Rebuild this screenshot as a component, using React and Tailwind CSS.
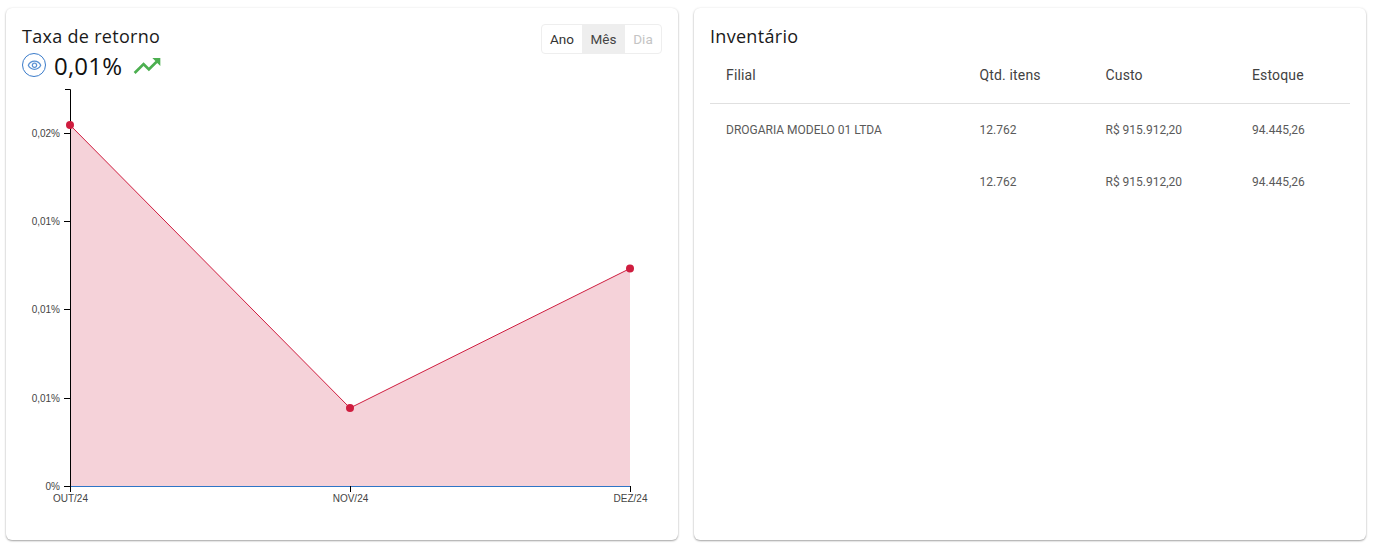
const yTicks = [
  { y: 133, label: '0,02%' },
  { y: 221, label: '0,01%' },
  { y: 309, label: '0,01%' },
  { y: 398, label: '0,01%' },
  { y: 486, label: '0%' },
];

const xTicks = [
  { x: 70, label: 'OUT/24' },
  { x: 350, label: 'NOV/24' },
  { x: 630, label: 'DEZ/24' },
];

const points = [
  [70, 125],
  [350, 408],
  [630, 268.5],
];

const rows = [
  { filial: 'DROGARIA MODELO 01 LTDA', qtd: '12.762', custo: 'R$ 915.912,20', estoque: '94.445,26' },
  { filial: '', qtd: '12.762', custo: 'R$ 915.912,20', estoque: '94.445,26' },
];

// svg coords are offset from the card's left/top edge
const Chart = () => (
  <svg width="672" height="452" viewBox="6 89 672 452" className="block">
    <polygon points="70,125 350,408 630,268.5 630,486 70,486" fill="#cf1d3f" fillOpacity="0.2" />
    <polyline points="70,125 350,408 630,268.5" fill="none" stroke="#cf1d3f" strokeWidth="1" />
    <line x1="70" y1="486.5" x2="630" y2="486.5" stroke="#2f75c7" strokeWidth="1" />
    <path d="M65 89.5H70.5V490" fill="none" stroke="#000" strokeWidth="1" />
    {yTicks.map((t) => (
      <g key={t.y}>
        <line x1="64" y1={t.y + 0.5} x2="70" y2={t.y + 0.5} stroke="#000" />
        <text x="60" y={t.y + 4} textAnchor="end" fontSize="10" fontFamily="Liberation Sans, sans-serif" fill="#444">
          {t.label}
        </text>
      </g>
    ))}
    {xTicks.map((t) => (
      <g key={t.x}>
        <line x1={t.x + 0.5} y1="486" x2={t.x + 0.5} y2="492" stroke="#000" />
        <text x={t.x + 0.5} y="502" textAnchor="middle" fontSize="10" fontFamily="Liberation Sans, sans-serif" fill="#444">
          {t.label}
        </text>
      </g>
    ))}
    {points.map(([x, y]) => (
      <circle key={x} cx={x} cy={y} r="4" fill="#cf1d3f" />
    ))}
  </svg>
);

const App = () => {
  return (
    <div className="flex h-[558px] w-[1374px] items-start gap-4 bg-white pl-[6px] pt-2 font-['Roboto',sans-serif]">
      {/* Taxa de retorno */}
      <div className="h-[532px] w-[672px] overflow-hidden rounded-md bg-white shadow-[0_1px_2px_rgba(0,0,0,0.35),0_0_3px_rgba(0,0,0,0.06)]">
        <div className="flex h-[81px] items-start justify-between pl-4 pr-4 pt-4">
          <div>
            <h2 className="font-['Open_Sans',sans-serif] text-lg font-medium leading-6 tracking-[0.3px] text-[#1a1a1a]">Taxa de retorno</h2>
            <div className="mt-[5px] flex h-6 items-center">
              <span className="flex size-6 items-center justify-center rounded-full border border-[#3a7bca]">
                <svg width="15" height="15" viewBox="0 0 24 24" fill="#3a7bca" fillOpacity="0.85">
                  <path d="M12 6c3.79 0 7.17 2.13 8.82 5.5C19.17 14.87 15.79 17 12 17s-7.17-2.13-8.82-5.5C4.83 8.13 8.21 6 12 6m0-2C7 4 2.73 7.11 1 11.5 2.73 15.89 7 19 12 19s9.27-3.11 11-7.5C21.27 7.11 17 4 12 4zm0 5c1.38 0 2.5 1.12 2.5 2.5S13.38 14 12 14s-2.5-1.12-2.5-2.5S10.62 9 12 9m0-2c-2.48 0-4.5 2.02-4.5 4.5S9.52 16 12 16s4.5-2.02 4.5-4.5S14.48 7 12 7z" />
                </svg>
              </span>
              <span className="ml-2 pt-[2px] font-['Open_Sans',sans-serif] text-2xl font-medium leading-6 tracking-[0.2px] text-[#111]">0,01%</span>
              <svg width="32" height="32" viewBox="0 0 24 24" fill="#4caf50" className="ml-[9px] mt-[2px]">
                <path d="m16 6 2.29 2.29-4.88 4.88-4-4L2 16.59 3.41 18l6-6 4 4 6.3-6.29L22 12V6z" />
              </svg>
            </div>
          </div>
          <div className="flex h-[30px] items-stretch rounded border border-[#eeeeee] text-[13.5px]">
            <button className="w-[40px] text-[#333]">Ano</button>
            <button className="w-[43px] bg-[#eeeeee] text-[#444]">Mês</button>
            <button className="w-[36px] text-[#c4c4c4]">Dia</button>
          </div>
        </div>
        <Chart />
      </div>

      {/* Inventário */}
      <div className="h-[532px] w-[672px] rounded-md bg-white px-4 pt-4 shadow-[0_1px_2px_rgba(0,0,0,0.35),0_0_3px_rgba(0,0,0,0.06)]">
        <h2 className="font-['Open_Sans',sans-serif] text-lg font-medium leading-6 tracking-[0.3px] text-[#1a1a1a]">Inventário</h2>
        <table className="w-[640px] table-fixed border-collapse">
          <colgroup>
            <col className="w-[269.5px]" />
            <col className="w-[126px]" />
            <col className="w-[146.5px]" />
            <col className="w-[98px]" />
          </colgroup>
          <thead>
            <tr className="h-[55px] border-b border-[#e0e0e0] text-left text-sm tracking-[0.15px] text-[#424242]">
              <th className="pl-4 font-normal">Filial</th>
              <th className="font-normal">Qtd. itens</th>
              <th className="font-normal">Custo</th>
              <th className="font-normal">Estoque</th>
            </tr>
          </thead>
          <tbody>
            {rows.map((r, i) => (
              <tr key={i} className="h-[52px] text-xs text-[#5a5a5a]">
                <td className="pl-4 pt-[2px]">{r.filial}</td>
                <td className="pt-[2px]">{r.qtd}</td>
                <td className="pt-[2px]">{r.custo}</td>
                <td className="pt-[2px]">{r.estoque}</td>
              </tr>
            ))}
          </tbody>
        </table>
      </div>
    </div>
  );
};

export default App;
